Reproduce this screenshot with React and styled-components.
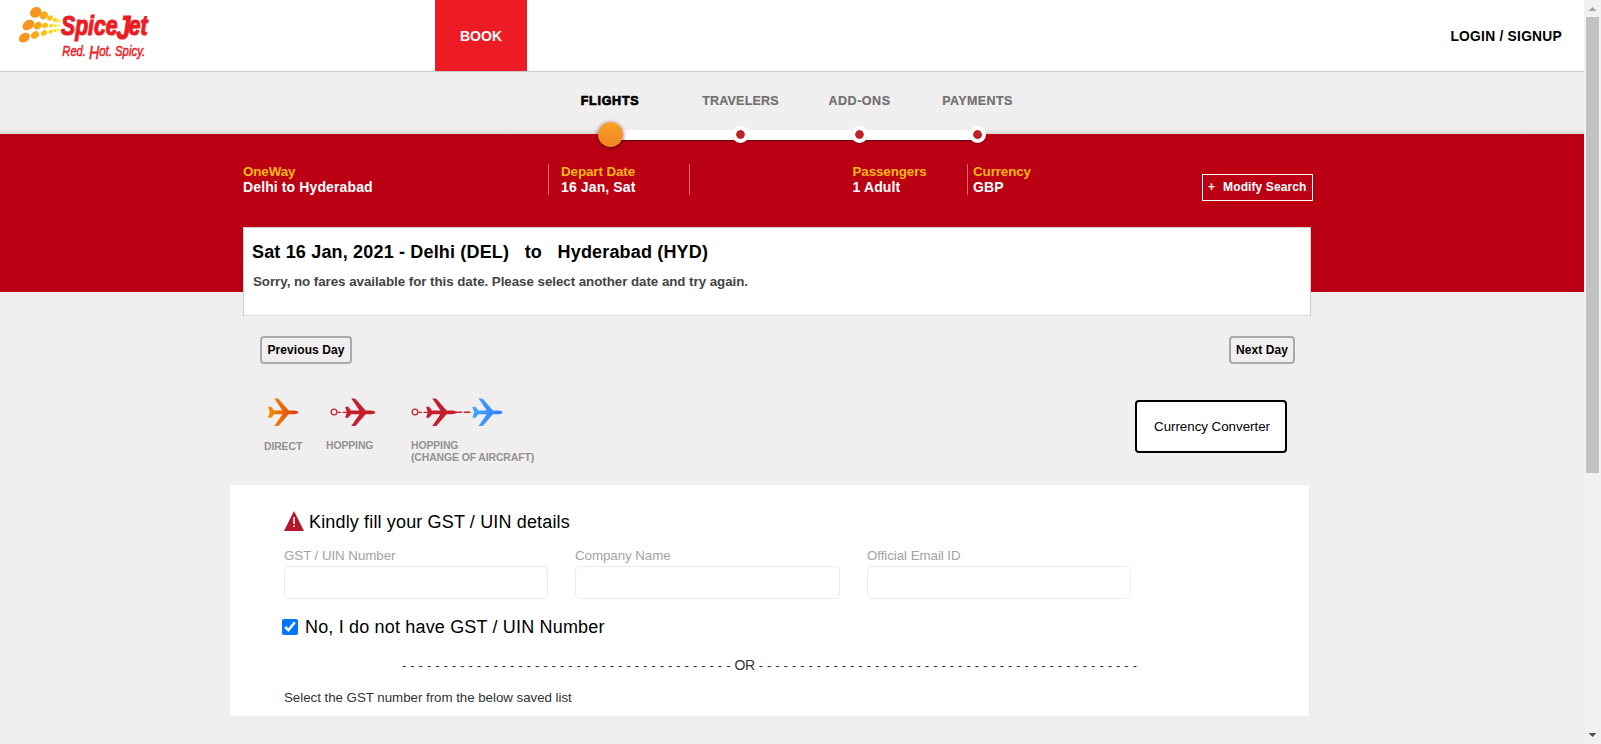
import React from "react";
import styled, { createGlobalStyle } from "styled-components";

const GlobalStyle = createGlobalStyle`
  * { box-sizing: border-box; }
  body {
    margin: 0;
    background: #f0eeef;
    color: #000;
    font: 13px/16px "Liberation Sans", Arial, sans-serif;
    letter-spacing: 0.2px;
    overflow: hidden;
  }
`;

const Screen = styled.div`
  display: flex;
  width: 1601px;
  height: 744px;
  overflow: hidden;
`;

const Page = styled.div`
  flex: 1;
  display: flex;
  flex-direction: column;
`;

const Header = styled.header`
  display: flex;
  height: 72px;
  flex: none;
  background: #fff;
  border-bottom: 1px solid #ccc;
`;

const LogoBox = styled.a`
  display: block;
  width: 435px;
  height: 71px;
`;

const BookTab = styled.a`
  width: 92px;
  height: 71px;
  background: #ed1c24;
  color: #fff;
  font-size: 14px;
  font-weight: bold;
  line-height: 72px;
  text-align: center;
  letter-spacing: 0;
`;

const Login = styled.a`
  margin-left: auto;
  margin-right: 22px;
  font-size: 13.8px;
  font-weight: bold;
  line-height: 73px;
  letter-spacing: 0.25px;
`;

const StepBand = styled.nav`
  height: 62px;
  flex: none;
  padding-left: 543px;
  display: flex;
  background: linear-gradient(#f0eeef 57px, #d8d6d7 62px);
  position: relative;
  z-index: 1;
`;

const Step = styled.div`
  display: flex;
  flex-direction: column;
  align-items: center;
  width: ${(p) => p.$width}px;
  height: 80px;
  padding-top: 21px;
  position: relative;
  font-size: 12.5px;
  font-weight: bold;
  line-height: 17px;
  white-space: nowrap;
  letter-spacing: ${(p) => p.$spacing}px;
  color: ${(p) => (p.$active ? "#000" : "#717071")};
  -webkit-text-stroke: ${(p) => (p.$active ? "0.7px #000" : "0.2px #717071")};
`;

const Track = styled.div`
  position: absolute;
  left: 610px;
  top: 58px;
  width: 368px;
  height: 9.5px;
  background: #fff;
  box-shadow: 0 2px 2px -1px rgba(60, 0, 0, 0.75);
`;

const Dot = styled.span`
  position: absolute;
  top: ${(p) => (p.$active ? 50 : 54)}px;
  width: ${(p) => (p.$active ? 25 : 17)}px;
  height: ${(p) => (p.$active ? 25 : 17)}px;
  border-radius: 50%;
  border: ${(p) => (p.$active ? 0 : "4px solid #fff")};
  background: ${(p) => (p.$active ? "linear-gradient(#f9a02b, #ee8420)" : "#bd2228")};
  background-clip: padding-box;
  box-shadow: ${(p) => (p.$active ? "0 1px 4px rgba(50,0,0,.65)" : "0 2px 2px -1px rgba(60,0,0,.4)")};
`;

const RedBand = styled.section`
  height: 158px;
  flex: none;
  padding: 30px 0 0 243px;
  background: #bc0014;
`;

const Summary = styled.div`
  display: flex;
  height: 63px;
`;

const Fact = styled.div`
  height: 31px;
  width: ${(p) => p.$width}px;
  padding-left: ${(p) => p.$pad || 0}px;
  border-left: ${(p) => (p.$rule ? "1px solid #dc6a76" : "0")};
  color: #fff;
  font-weight: bold;
  white-space: nowrap;
`;

const FactLabel = styled.div`
  color: #fcb813;
  font-size: 13.333px;
  line-height: 15px;
  letter-spacing: -0.07px;
`;

const FactValue = styled.div`
  letter-spacing: 0.12px;
  font-size: 14px;
`;

const ModifyButton = styled.button`
  display: flex;
  gap: 8px;
  width: 111px;
  height: 27px;
  margin-top: 10px;
  padding: 4px 0 0 5px;
  border: 1px solid #fff;
  background: transparent;
  color: #fff;
  font: bold 12px/16px "Liberation Sans", Arial, sans-serif;
  letter-spacing: 0.1px;
  white-space: nowrap;
`;

const ResultCard = styled.div`
  width: 1068px;
  height: 89px;
  padding: 14px 9px;
  background: #fff;
  border: 1px solid #ccc;
  border-bottom-color: #ddd;
  h1 {
    margin: 0 0 12px -1px;
    font-size: 18px;
    line-height: 20px;
    font-weight: bold;
    white-space: pre;
    letter-spacing: 0.17px;
  }
  p {
    margin: 0;
    font-size: 13.333px;
    font-weight: bold;
    color: #444;
    letter-spacing: -0.04px;
  }
`;

const DayNav = styled.div`
  display: flex;
  justify-content: space-between;
  margin: 44px 289px 0 260px;
`;

const DayButton = styled.button`
  width: ${(p) => p.$width}px;
  height: 28px;
  padding: 0;
  border: 2px solid #aaa;
  border-radius: 4px;
  background: transparent;
  color: #000;
  font: bold 12px/16px "Liberation Sans", Arial, sans-serif;
  letter-spacing: 0.07px;
`;

const ToolsRow = styled.div`
  display: flex;
  height: 121px;
  padding-left: 264px;
`;

const LegendItem = styled.div`
  width: ${(p) => p.$width}px;
  padding-top: 34px;
  color: #939293;
  font-size: 10.4px;
  font-weight: bold;
  line-height: 12px;
  letter-spacing: -0.09px;
  white-space: nowrap;
  svg { display: block; margin-bottom: ${(p) => p.$gap || 13}px; }
`;

const ConverterButton = styled.button`
  width: 152px;
  height: 53px;
  margin: 36px 297px 0 auto;
  padding: 0 0 0 2px;
  border: 2px solid #000;
  border-radius: 4px;
  background: #fff;
  color: #000;
  font: 13.333px/16px "Liberation Sans", Arial, sans-serif;
  letter-spacing: -0.02px;
`;

const GstPanel = styled.section`
  display: flex;
  flex-direction: column;
  width: 1079px;
  height: 231px;
  margin-left: 230px;
  padding: 26px 54px 0;
  background: #fff;
`;

const GstTitle = styled.h2`
  display: flex;
  gap: 5px;
  height: 20px;
  margin: 0 0 18px;
  font-size: 18px;
  line-height: 22px;
  font-weight: normal;
  letter-spacing: 0.15px;
`;

const Fields = styled.div`
  display: grid;
  grid-template-columns: 264px 265px 264px;
  column-gap: 27px;
`;

const Field = styled.label`
  display: flex;
  flex-direction: column;
  justify-content: space-between;
  height: 50px;
  font-size: 13.333px;
  line-height: 14px;
  letter-spacing: -0.06px;
  color: #a3a3a3;
`;

const TextInput = styled.input`
  display: block;
  width: 100%;
  height: 33px;
  border: 1px solid #ececec;
  border-radius: 5px;
  background: #fff;
`;

const CheckLine = styled.label`
  display: flex;
  align-items: center;
  gap: 7px;
  margin: 18px 0 0 -2px;
  font-size: 18px;
  line-height: 20px;
  letter-spacing: 0.17px;
  input { width: 16px; height: 16px; margin: 0; accent-color: #0075ff; }
`;

const OrLine = styled.div`
  margin: 20px 0 0 118px;
  white-space: nowrap;
  color: #333;
  letter-spacing: 0.185px;
  b { font-weight: normal; font-size: 14px; letter-spacing: -0.3px; }
`;

const Hint = styled.div`
  margin-top: 16px;
  color: #333;
  font-size: 13.333px;
  letter-spacing: -0.035px;
`;

const Scrollbar = styled.div`
  display: flex;
  flex-direction: column;
  align-items: center;
  justify-content: space-between;
  width: 17px;
  height: 744px;
  background: #f1f1f1;
`;

const Thumb = styled.div`
  width: 13px;
  height: 456px;
  margin-bottom: auto;
  background: #c1c1c1;
`;

const ARROW_UP = "M4.5 11h8l-4-4z";
const ARROW_DOWN = "M4.5 6h8l-4 4z";

const ScrollArrow = ({ d, fill }) => (
  <svg width="17" height="17" display="block"><path d={d} fill={fill} /></svg>
);

const LOGO_DOTS = [
  [107, 37, 18, 15, "#f7941d"], [131, 46, 13, 11, "#fba919"], [150, 54, 9, 7.5, "#fdbf12"],
  [165, 60, 7, 5.5, "#fed30d"], [175, 63, 5, 4, "#ffe10a"],
  [85, 75, 19, 14, "#f7941d"], [113, 77, 13, 10, "#fba919"], [135, 76, 9, 8, "#fdbf12"],
  [153, 77, 6, 5, "#fed30d"], [166, 77, 5, 4, "#ffe10a"], [175, 76, 3, 3, "#ffec08"],
  [73, 113, 18, 13, "#f7941d"], [105, 105, 13, 10, "#fba919"], [132, 99, 10, 7.5, "#fdbf12"],
  [152, 95, 7, 5.5, "#fed30d"], [165, 92, 5, 5, "#ffe10a"], [174, 89, 3, 4, "#ffec08"],
];

const Logo = () => (
  <svg width="160" height="71" viewBox="0 0 480 213" display="block" overflow="visible">
    {LOGO_DOTS.map(([x, y, rx, ry, fill]) => (
      <ellipse key={`${x}-${y}`} cx={x} cy={y} rx={rx} ry={ry} fill={fill} transform={`rotate(-35 ${x} ${y})`} />
    ))}
    <g fill="#ed1c24" stroke="#ed1c24" fontFamily="Liberation Sans, Arial, sans-serif" fontStyle="italic" letterSpacing="0">
      <text transform="translate(183 104) scale(.785 1)" fontSize="81" fontWeight="bold" strokeWidth="3.5">
        Spice<tspan dy="13" dx="-5" fontSize="97">J</tspan><tspan dy="-13" dx="-6">et</tspan>
      </text>
      <text transform="translate(187 169) scale(.76 1)" fontSize="44" strokeWidth="1.6">
        Red. <tspan fontSize="56" dy="9">H</tspan><tspan fontSize="45" dy="-9">ot. Spicy.</tspan>
      </text>
    </g>
  </svg>
);

const PLANE =
  "M.2 9.3Q.2 8.800 1 8.800H3.200L6 12.400H14.400L6.300.500H9.300Q10.200.500 10.800 1.200L20.600 12.400H26Q30.300 12.700 30.300 14.300 30.300 15.900 26 16.200H20.600L10.800 27.400Q10.200 28.100 9.300 28.100H6.300L14.400 16.200H6L3.200 19.800H1Q.2 19.800.2 19.300L1.800 14.300z";

const Plane = ({ x = 0, fill }) => <path d={PLANE} fill={fill} transform={`translate(${x} 0)`} />;

const Origin = () => (
  <g fill="none" stroke="#c4202b">
    <circle cx="4" cy="14" r="2.9" strokeWidth="1.3" />
    <path d="M7.500 14.300h3.500M12.500 14.300h5" strokeWidth="1.2" />
  </g>
);

const DirectIcon = () => (
  <svg width="36" height="29">
    <defs>
      <linearGradient id="orange" x1="0" x2="1">
        <stop offset="0" stopColor="#f29100" />
        <stop offset="1" stopColor="#de3a0b" />
      </linearGradient>
    </defs>
    <Plane x={4} fill="url(#orange)" />
  </svg>
);

const HoppingIcon = () => (
  <svg width="52" height="29">
    <g transform="translate(4 0)"><Origin /><Plane x={15} fill="#c41f2a" /></g>
  </svg>
);

const ChangeIcon = () => (
  <svg width="94" height="29">
    <defs>
      <linearGradient id="blue" x1="0" x2="1">
        <stop offset="0" stopColor="#45a5ff" />
        <stop offset="1" stopColor="#2e7dfb" />
      </linearGradient>
    </defs>
    <Origin />
    <Plane x={15} fill="#c41f2a" />
    <path d="M44 14.300h7M52.500 14.300h7" stroke="#c4202b" strokeWidth="1.5" />
    <Plane x={61.3} fill="url(#blue)" />
  </svg>
);

const WarningIcon = () => (
  <svg width="20" height="20" viewBox="0 0 20 20">
    <path d="M10 0l10 20H0z" fill="#b5172a" />
    <path d="M9.300 6h1.500v7H9.300zM9.300 14.500h1.500V16H9.300z" fill="#fff" />
  </svg>
);

const STEPS = [
  ["FLIGHTS", 134, 0.75], ["TRAVELERS", 127, 0.2], ["ADD-ONS", 111, 0.55], ["PAYMENTS", 125, 0.4],
];

const FACTS = [
  { width: 305, label: "OneWay", value: "Delhi to Hyderabad" },
  { width: 141, pad: 12, rule: true, label: "Depart Date", value: "16 Jan, Sat" },
  { width: 278, pad: 162.5, rule: true, label: "Passengers", value: "1 Adult" },
  { width: 235, pad: 5, rule: true, label: "Currency", value: "GBP" },
];

export default function App() {
  return (
    <>
      <GlobalStyle />
      <Screen>
        <Page>
          <Header>
            <LogoBox><Logo /></LogoBox>
            <BookTab>BOOK</BookTab>
            <Login>LOGIN / SIGNUP</Login>
          </Header>
          <StepBand>
            <Track />
            {STEPS.map(([name, width, spacing], i) => (
              <Step key={name} $width={width} $spacing={spacing} $active={i === 0}>
                {name}
                <Dot $active={i === 0} />
              </Step>
            ))}
          </StepBand>
          <RedBand>
            <Summary>
              {FACTS.map((f) => (
                <Fact key={f.label} $width={f.width} $pad={f.pad} $rule={f.rule}>
                  <FactLabel>{f.label}</FactLabel>
                  <FactValue>{f.value}</FactValue>
                </Fact>
              ))}
              <ModifyButton><span>+</span><span>Modify Search</span></ModifyButton>
            </Summary>
            <ResultCard>
              <h1>{"Sat 16 Jan, 2021 - Delhi (DEL)   to   Hyderabad (HYD)"}</h1>
              <p>Sorry, no fares available for this date. Please select another date and try again.</p>
            </ResultCard>
          </RedBand>
          <DayNav>
            <DayButton $width={92}>Previous Day</DayButton>
            <DayButton $width={66}>Next Day</DayButton>
          </DayNav>
          <ToolsRow>
            <LegendItem $width={62} $gap={14}><DirectIcon />DIRECT</LegendItem>
            <LegendItem $width={85}><HoppingIcon />HOPPING</LegendItem>
            <LegendItem $width={200}><ChangeIcon />HOPPING<br />(CHANGE OF AIRCRAFT)</LegendItem>
            <ConverterButton>Currency Converter</ConverterButton>
          </ToolsRow>
          <GstPanel>
            <GstTitle><WarningIcon />Kindly fill your GST / UIN details</GstTitle>
            <Fields>
              {["GST / UIN Number", "Company Name", "Official Email ID"].map((name) => (
                <Field key={name}>{name}<TextInput /></Field>
              ))}
            </Fields>
            <CheckLine><input type="checkbox" defaultChecked />No, I do not have GST / UIN Number</CheckLine>
            <OrLine>{"- ".repeat(40)}<b>OR</b>{" -".repeat(46)}</OrLine>
            <Hint>Select the GST number from the below saved list</Hint>
          </GstPanel>
        </Page>
        <Scrollbar>
          <ScrollArrow d={ARROW_UP} fill="#a3a3a3" />
          <Thumb />
          <ScrollArrow d={ARROW_DOWN} fill="#505050" />
        </Scrollbar>
      </Screen>
    </>
  );
}
